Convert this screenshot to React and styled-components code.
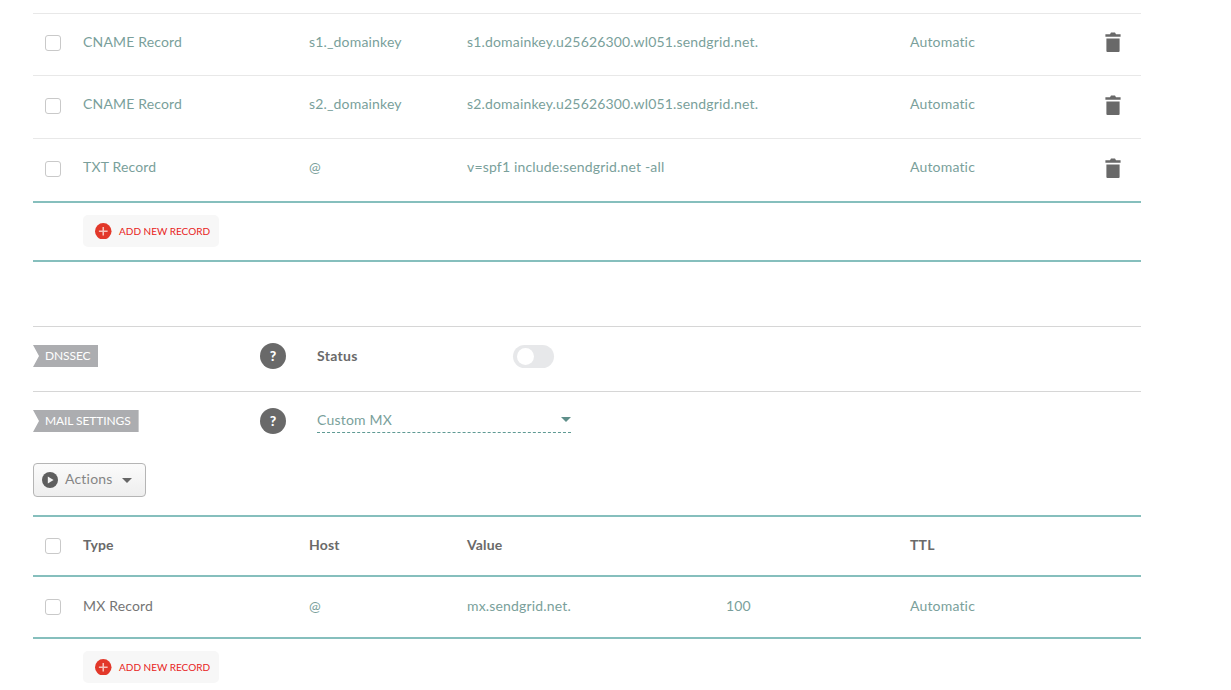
import React from "react";
import styled, { createGlobalStyle } from "styled-components";

const Global = createGlobalStyle`
  html, body { margin: 0; padding: 0; background: #fff; overflow: hidden; }
  body { font-family: "Lato", "Liberation Sans", sans-serif; }
`;

const Page = styled.div`
  width: 1108px;
  margin-left: 33px;
  padding-top: 13px;
  font-size: 14px;
  color: #7a9f9b;
`;

const Row = styled.div`
  display: grid;
  grid-template-columns: 50px 226px 158px 259px 184px 1fr auto;
  align-items: center;
  box-sizing: border-box;
  height: ${(p) => p.$h}px;
  padding-bottom: ${(p) => p.$pb || 0}px;
  border-top: ${(p) => p.$top};
`;

const CheckCell = styled.div`
  padding-left: 12px;
  display: flex;
`;

const Check = styled.span`
  display: block;
  box-sizing: border-box;
  width: 16px;
  height: 16px;
  border: 1px solid #c9c9c9;
  border-radius: 3px;
  background: #fff;
`;

const Cell = styled.div`
  white-space: nowrap;
  letter-spacing: 0.17px;
  padding-bottom: 4px;
  color: ${(p) => p.$color || "#7a9f9b"};
  font-weight: ${(p) => (p.$bold ? 700 : 400)};
`;

const TrashCell = styled.div`
  display: flex;
  padding: 0 20px 2px 0;
`;

const AddBar = styled.div`
  box-sizing: border-box;
  padding: 12px 0 0 50px;
  height: ${(p) => p.$h}px;
  border-top: 2px solid #86bfbd;
  border-bottom: ${(p) => (p.$closed ? "2px solid #86bfbd" : "none")};
`;

const AddButton = styled.button`
  display: flex;
  align-items: center;
  gap: 7.5px;
  box-sizing: border-box;
  width: 136px;
  height: 32px;
  padding: 0 0 0 12px;
  border: 0;
  border-radius: 5px;
  background: #f7f7f7;
  color: #e8231c;
  font: 400 10px "Lato", "Liberation Sans", sans-serif;
  letter-spacing: 0px;
  white-space: nowrap;
`;

const Spacer = styled.div`
  height: 64px;
`;

const Section = styled.div`
  display: flex;
  align-items: center;
  box-sizing: border-box;
  height: 65px;
  border-top: 1px solid #d6d6d6;
  padding-bottom: 6px;
`;

const LabelCell = styled.div`
  width: 227px;
  display: flex;
`;

const Tag = styled.span`
  display: block;
  box-sizing: border-box;
  height: 22px;
  line-height: 21px;
  padding: 0 8px 0 12px;
  background: #acadb0;
  color: #fff;
  font-size: 12px;
  letter-spacing: -0.1px;
  white-space: nowrap;
  clip-path: polygon(0 0, 100% 0, 100% 100%, 0 100%, 6px 50%);
`;

const Help = styled.span`
  display: flex;
  align-items: center;
  justify-content: center;
  box-sizing: border-box;
  width: 26px;
  height: 26px;
  margin-right: 31px;
  padding-bottom: 1px;
  border-radius: 50%;
  background: #696969;
  color: #fff;
  font-weight: 900;
  font-size: 14px;
`;

const StatusLabel = styled.span`
  width: 196px;
  padding-bottom: 2px;
  font-weight: 700;
  font-size: 14px;
  letter-spacing: 0.3px;
  color: #6a6a6a;
`;

const Switch = styled.span`
  display: block;
  position: relative;
  width: 41px;
  height: 23px;
  border-radius: 12px;
  background: #e7e8ea;
`;

const Knob = styled.span`
  position: absolute;
  top: 3px;
  left: 4px;
  width: 17px;
  height: 17px;
  border-radius: 50%;
  background: #fff;
`;

const Select = styled.div`
  display: flex;
  align-items: center;
  justify-content: space-between;
  box-sizing: border-box;
  width: 254px;
  height: 25px;
  margin-top: -2px;
  border-bottom: 1px dashed #5f9a94;
  color: #7a9f9b;
  letter-spacing: 0.2px;
`;

const Caret = styled.span`
  width: 0;
  height: 0;
  border-left: 5px solid transparent;
  border-right: 5px solid transparent;
  border-top: 5px solid ${(p) => p.$color};
`;

const ActionsWrap = styled.div`
  padding: 7px 0 18px;
`;

const ActionsButton = styled.button`
  display: flex;
  align-items: center;
  box-sizing: border-box;
  width: 113px;
  height: 34px;
  padding: 0 0 0 8px;
  border: 1px solid #b5b5b5;
  border-radius: 4px;
  background: linear-gradient(#fbfbfb, #eeeeee);
  color: #858585;
  font: 400 14px "Lato", "Liberation Sans", sans-serif;
  letter-spacing: 0.2px;
`;

const ActionsText = styled.span`
  margin: 0 9px 3px 7px;
`;

const Plus = () => (
  <svg width="16.5" height="16.5" viewBox="0 0 17 17" aria-hidden="true">
    <circle cx="8.5" cy="8.5" r="8.5" fill="#e2382a" />
    <path d="M8.5 4v9M4 8.5h9" stroke="#f6c4bd" strokeWidth="1.6" />
  </svg>
);

const Trash = () => (
  <svg width="16" height="20" viewBox="0 0 16 20" aria-hidden="true">
    <path d="M5 2.2 6 0.5h4l1 1.7h4.6v2.6H0.4V2.2z" fill="#696969" />
    <path d="M1.4 6.6h13.2V19a1 1 0 0 1-1 1H2.4a1 1 0 0 1-1-1z" fill="#696969" />
  </svg>
);

const Play = () => (
  <svg width="16" height="16" viewBox="0 0 16 16" aria-hidden="true">
    <circle cx="8" cy="8" r="8" fill="#5e5e5e" />
    <path d="M5.8 4.4 11.6 8l-5.8 3.6z" fill="#f4f4f4" />
  </svg>
);

const records = [
  { type: "CNAME Record", host: "s1._domainkey", value: "s1.domainkey.u25626300.wl051.sendgrid.net.", h: 62 },
  { type: "CNAME Record", host: "s2._domainkey", value: "s2.domainkey.u25626300.wl051.sendgrid.net.", h: 63 },
  { type: "TXT Record", host: "@", value: "v=spf1 include:sendgrid.net -all", h: 63 },
];

const AddNew = () => (
  <AddButton>
    <Plus />
    ADD NEW RECORD
  </AddButton>
);

export default function App() {
  return (
    <Page>
      <Global />
      {records.map((r) => (
        <Row key={r.host} $h={r.h} $pb={3} $top="1px solid #e8e8e8">
          <CheckCell><Check /></CheckCell>
          <Cell>{r.type}</Cell>
          <Cell>{r.host}</Cell>
          <Cell>{r.value}</Cell>
          <span />
          <Cell>Automatic</Cell>
          <TrashCell><Trash /></TrashCell>
        </Row>
      ))}
      <AddBar $h={61} $closed>
        <AddNew />
      </AddBar>
      <Spacer />
      <Section>
        <LabelCell><Tag>DNSSEC</Tag></LabelCell>
        <Help>?</Help>
        <StatusLabel>Status</StatusLabel>
        <Switch><Knob /></Switch>
      </Section>
      <Section>
        <LabelCell><Tag>MAIL SETTINGS</Tag></LabelCell>
        <Help>?</Help>
        <Select>
          Custom MX
          <Caret $color="#5f8f8a" />
        </Select>
      </Section>
      <ActionsWrap>
        <ActionsButton>
          <Play />
          <ActionsText>Actions</ActionsText>
          <Caret $color="#666" />
        </ActionsButton>
      </ActionsWrap>
      <Row $h={60} $top="2px solid #86bfbd">
        <CheckCell><Check /></CheckCell>
        <Cell $bold $color="#6a6a6a">Type</Cell>
        <Cell $bold $color="#6a6a6a">Host</Cell>
        <Cell $bold $color="#6a6a6a">Value</Cell>
        <span />
        <Cell $bold $color="#6a6a6a">TTL</Cell>
      </Row>
      <Row $h={62} $top="2px solid #86bfbd">
        <CheckCell><Check /></CheckCell>
        <Cell $color="#757575">MX Record</Cell>
        <Cell>@</Cell>
        <Cell>mx.sendgrid.net.</Cell>
        <Cell>100</Cell>
        <Cell>Automatic</Cell>
      </Row>
      <AddBar $h={53}>
        <AddNew />
      </AddBar>
    </Page>
  );
}
